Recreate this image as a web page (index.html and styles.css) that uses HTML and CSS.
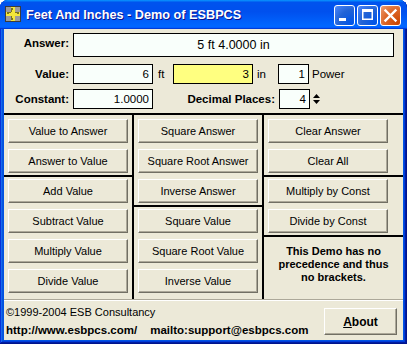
FILE: index.html
```html
<!DOCTYPE html>
<html lang="en">
<head>
    <meta charset="UTF-8">
    <title>Feet And Inches - Demo of ESBPCS</title>
<link rel="stylesheet" href="styles.css">
</head>
<body>
<div class="window">
    <div class="title-bar">
        <svg class="app-icon" width="16" height="16" viewBox="0 0 16 16">
            <rect x="0.5" y="0.5" width="15" height="15" fill="#9c9c9c" stroke="#3c3c3c"/>
            <rect x="6" y="1" width="4" height="14" fill="#f3e63a"/>
            <rect x="1" y="6" width="14" height="4" fill="#f3e63a"/>
            <path d="M6 3h2M6 5h1M6 11h1M6 13h2M3 6v2M5 6v1M11 6v1M13 6v2" stroke="#000" stroke-width="1"/>
        </svg>
        <span class="title">Feet And Inches - Demo of ESBPCS</span>
        <div class="controls">
            <button class="ctl"><svg width="21" height="21" viewBox="0 0 21 21"><rect x="5" y="13" width="7" height="3" fill="#fff"/></svg></button>
            <button class="ctl"><svg width="21" height="21" viewBox="0 0 21 21"><path d="M5 4h11v11H5z M6.5 7v6.5h8V7z" fill="#fff" fill-rule="evenodd"/></svg></button>
            <button class="ctl close"><svg width="21" height="21" viewBox="0 0 21 21"><path d="M5.5 5.5l10 10M15.5 5.5l-10 10" stroke="#fff" stroke-width="2.4" stroke-linecap="square"/></svg></button>
        </div>
    </div>

    <div class="client">
        <div class="fields">
            <div class="row answer-row">
                <span class="lbl">Answer:</span>
                <div class="box answer">5 ft 4.0000 in</div>
            </div>
            <div class="row value-row">
                <span class="lbl">Value:</span>
                <div class="box num wide">6</div>
                <span class="unit ft">ft</span>
                <div class="box num wide yellow">3</div>
                <span class="unit in">in</span>
                <div class="box num narrow">1</div>
                <span class="unit power">Power</span>
            </div>
            <div class="row const-row">
                <span class="lbl">Constant:</span>
                <div class="box num wide">1.0000</div>
                <span class="lbl places">Decimal Places:</span>
                <div class="box num narrow">4</div>
                <svg class="spin" width="9" height="16" viewBox="0 0 9 16">
                    <path d="M4.5 3L8 7H1z M1 9h7l-3.5 4z" fill="#000"/>
                </svg>
            </div>
        </div>

        <div class="pad">
            <div class="col">
                <div class="sect">
                    <button class="btn">Value to Answer</button>
                    <button class="btn">Answer to Value</button>
                </div>
                <div class="sect">
                    <button class="btn">Add Value</button>
                    <button class="btn">Subtract Value</button>
                    <button class="btn">Multiply Value</button>
                    <button class="btn">Divide Value</button>
                </div>
            </div>
            <div class="col">
                <div class="sect">
                    <button class="btn">Square Answer</button>
                    <button class="btn">Square Root Answer</button>
                    <button class="btn">Inverse Answer</button>
                </div>
                <div class="sect">
                    <button class="btn">Square Value</button>
                    <button class="btn">Square Root Value</button>
                    <button class="btn">Inverse Value</button>
                </div>
            </div>
            <div class="col last">
                <div class="sect">
                    <button class="btn">Clear Answer</button>
                    <button class="btn">Clear All</button>
                </div>
                <div class="sect">
                    <button class="btn">Multiply by Const</button>
                    <button class="btn">Divide by Const</button>
                </div>
                <div class="sect note">
                    This Demo has no<br>precedence and thus<br>no brackets.
                </div>
            </div>
        </div>

        <div class="footer">
            <div class="credits">
                <p class="copy">&copy;1999-2004 ESB Consultancy</p>
                <p class="links"><span>http://www.esbpcs.com/</span><span class="mail">mailto:support@esbpcs.com</span></p>
            </div>
            <button class="btn about"><u>A</u>bout</button>
        </div>
    </div>
</div>
</body>
</html>
```

FILE: styles.css
```css
body{
    margin: 0;
    background-color: #fff;
    font-family: "Liberation Sans", Arial, sans-serif;
    font-size: 11px;
    color: #000;
}
.window{
    width: 407px;
    height: 344px;
    box-sizing: border-box;
    padding: 0 4px 4px;
    background-color: #0054e3;
    border-radius: 8px 8px 0 0;
    display: flex;
    flex-direction: column;
    box-shadow: inset -1px -1px #00138c, inset 1px 1px #0831d9, inset -2px -2px #001ea0, inset 2px 2px #166aee, inset -3px -3px #003bda, inset 3px 3px #0855dd;
}

/* title bar */
.title-bar{
    height: 29px;
    margin: 0 -4px;
    padding: 0 6px 0 5px;
    display: flex;
    align-items: center;
    border-radius: 8px 8px 0 0;
    background: linear-gradient(180deg, #0997ff 0%, #0053ee 8%, #0050ee 40%, #0066ff 88%, #0066ff 93%, #005bff 95%, #003dd7 96%, #003dd7 100%);
}
.app-icon{
    margin-top: -1px;
    flex-shrink: 0;
}
.title{
    margin-left: 5px;
    color: #fff;
    font-weight: bold;
    font-size: 12.7px;
    text-shadow: 1px 1px #0f1089;
    flex: 1;
}
.controls{
    display: flex;
    gap: 2px;
    margin-top: 1px;
}
.ctl{
    width: 21px;
    height: 21px;
    padding: 0;
    border: 1px solid #fff;
    border-radius: 3px;
    background: radial-gradient(circle at 90% 90%, #0054e9 0%, #2263d5 55%, #4480f5 90%, #6d9cf8 100%);
    display: flex;
    box-sizing: border-box;
}
.ctl svg{
    margin: -1px;
}
.ctl.close{
    background: radial-gradient(circle at 90% 90%, #cc4600 0%, #dc6527 55%, #e5844f 80%, #f0a17c 100%);
}

/* client area */
.client{
    flex: 1;
    background-color: #ece9d8;
    display: flex;
    flex-direction: column;
}
.fields{
    height: 86px;
    box-sizing: border-box;
    padding-top: 4px;
    border-bottom: 2px solid #000;
}
.row{
    display: flex;
    align-items: center;
}
.lbl{
    width: 65px;
    text-align: right;
    font-weight: bold;
    font-size: 11.5px;
    margin-right: 4px;
    flex-shrink: 0;
}
.answer-row{
    height: 24px;
    align-items: flex-start;
}
.answer-row .lbl{
    padding-top: 4px;
}
.value-row{
    margin-top: 7px;
    height: 20px;
}
.const-row{
    margin-top: 5px;
    height: 20px;
}
.box{
    box-sizing: border-box;
    height: 20px;
    border: 1px solid #000;
    background-color: #f9fffb;
    font-size: 11.5px;
    line-height: 18px;
    flex-shrink: 0;
}
.answer{
    width: 321px;
    height: 24px;
    line-height: 22px;
    text-align: center;
    font-size: 12.5px;
}
.num{
    text-align: right;
    padding-right: 3px;
}
.wide{
    width: 80px;
}
.narrow{
    width: 31px;
}
.yellow{
    background-color: #ffff80;
}
.unit{
    font-size: 11.5px;
    flex-shrink: 0;
}
.ft{
    width: 15px;
    padding-left: 5px;
}
.in{
    width: 21px;
    padding-left: 4px;
}
.power{
    padding-left: 3px;
}
.places{
    width: 122px;
    margin-right: 4px;
}
.spin{
    margin-left: 2px;
}

/* button panel */
.pad{
    height: 184px;
    display: flex;
}
.col{
    width: 128px;
    border-right: 2px solid #000;
    display: flex;
    flex-direction: column;
}
.col.last{
    border-right: none;
    flex: 1;
}
.sect{
    padding: 2px 4px;
    display: flex;
    flex-direction: column;
    gap: 6px;
    border-bottom: 2px solid #000;
}
.sect:first-child{
    padding-top: 4px;
}
.sect:last-child{
    border-bottom: none;
    flex: 1;
}
.btn{
    width: 120px;
    height: 24px;
    padding: 0;
    box-sizing: border-box;
    font-family: "Liberation Sans", Arial, sans-serif;
    font-size: 11px;
    color: #000;
    background-color: #ece9d8;
    border: 1px solid;
    border-color: #fff #716f64 #716f64 #fff;
    box-shadow: inset -1px -1px #aca899;
}
.note{
    padding-top: 8px;
    text-align: center;
    font-weight: bold;
    font-size: 11px;
    line-height: 13px;
}

/* footer */
.footer{
    flex: 1;
    display: flex;
    justify-content: space-between;
    border-top: 1px solid #aca899;
    box-shadow: inset 0 1px #fff;
    padding: 0 6px 0 2px;
}
.credits p{
    margin: 0;
}
.copy{
    padding-top: 6px;
    line-height: 13px;
    font-size: 11px;
}
.links{
    margin-top: 5px !important;
    line-height: 13px;
    font-weight: bold;
    font-size: 11.5px;
}
.mail{
    margin-left: 13px;
}
.btn.about{
    width: 73px;
    height: 27px;
    margin-top: 8px;
    font-weight: bold;
    font-size: 12px;
}
```
